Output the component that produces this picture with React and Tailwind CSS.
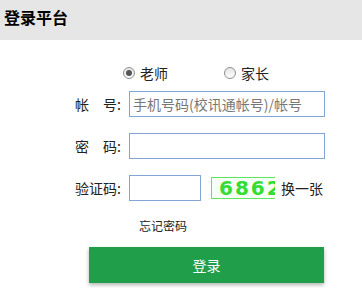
import React from "react";

const font = { fontFamily: '"Noto Sans CJK SC", "Noto Sans", sans-serif' };

function Radio({ checked, label }) {
  return (
    <label className="flex items-center gap-[5px]">
      <span className="w-[12px] h-[12px] rounded-full border border-[#8e8e8e] bg-gradient-to-b from-[#e6e6e6] to-[#fdfdfd] flex items-center justify-center">
        {checked && <span className="w-[6px] h-[6px] rounded-full bg-[#555]" />}
      </span>
      <span className="text-[14px] leading-[20px] text-[#222]">{label}</span>
    </label>
  );
}

function Row({ label, children }) {
  return (
    <div className="flex items-center h-[26px]">
      <div className="w-[121px] text-right text-[14px] text-[#222] whitespace-pre">{label}</div>
      <div className="ml-[8px] flex items-center">{children}</div>
    </div>
  );
}

export default function App() {
  return (
    <div className="w-[362px] h-[288px] bg-white overflow-hidden" style={font}>
      <div className="h-[40px] bg-[#e6e6e6] flex items-center pl-[4px] pb-[6px]">
        <span className="text-[16px] font-bold text-black">登录平台</span>
      </div>
      <div className="flex items-center h-[20px] mt-[23px] pl-[123px] gap-[56px]">
        <Radio checked label="老师" />
        <Radio label="家长" />
      </div>
      <div className="flex flex-col gap-[16px] mt-[8px]">
        <Row label={"帐　号:"}>
          <input
            className="w-[196px] h-[26px] border border-[#84a4d6] px-[3px] text-[14px] outline-none placeholder:text-[#777]"
            placeholder="手机号码(校讯通帐号)/帐号"
            style={font}
          />
        </Row>
        <Row label={"密　码:"}>
          <input
            type="password"
            className="w-[196px] h-[26px] border border-[#84a4d6] px-[3px] text-[14px] outline-none"
          />
        </Row>
        <Row label={"验证码:"}>
          <input className="w-[72px] h-[26px] border border-[#84a4d6] px-[3px] text-[14px] outline-none" />
          <div className="ml-[10px] w-[64px] h-[22px] border-y border-l border-[#5ee65e] bg-[#f6fff6] overflow-hidden flex items-center">
            <span
              className="pl-[7px] text-[20px] font-bold text-[#33dd33] tracking-[2px] leading-none whitespace-nowrap"
              style={{ fontFamily: '"DejaVu Sans", sans-serif' }}
            >
              6862
            </span>
          </div>
          <span className="ml-[6px] text-[14px] text-[#222]">换一张</span>
        </Row>
      </div>
      <div className="mt-[15px] pl-[139px] h-[20px] flex items-center text-[12px] text-[#222]">忘记密码</div>
      <div className="mt-[11px] ml-[89px] w-[235px] h-[36px] bg-[#219e4a] shadow-[0_2px_4px_rgba(0,0,0,0.3)] flex items-center justify-center text-white text-[14px]">
        登录
      </div>
    </div>
  );
}
